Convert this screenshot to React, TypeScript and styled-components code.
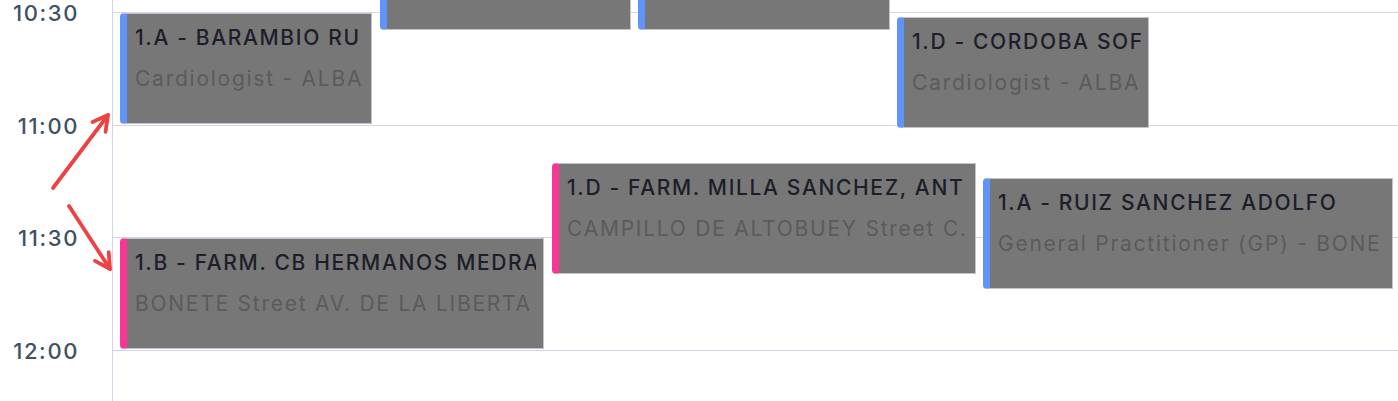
import React from 'react';
import styled, { createGlobalStyle } from 'styled-components';

const GlobalStyle = createGlobalStyle`
  html, body {
    margin: 0;
    padding: 0;
    background: #ffffff;
    overflow: hidden;
  }
  body {
    font-family: Inter, "Noto Sans", Arial, sans-serif;
  }
`;

const SLOT = 112.5;

const Page = styled.div`
  position: relative;
  display: flex;
  width: 1398px;
  height: 401px;
  overflow: hidden;
`;

const TimeColumn = styled.div`
  display: flex;
  flex-direction: column;
  width: 112px;
  flex-shrink: 0;
`;

const TimeLabel = styled.div`
  height: ${SLOT}px;
  flex-shrink: 0;
  padding-right: 33px;
  text-align: right;
  font-size: 22px;
  line-height: 27px;
  font-weight: 500;
  color: #3e5165;
  letter-spacing: 1.6px;
`;

const DayArea = styled.div`
  position: relative;
  flex: 1;
  border-left: 1px solid #d3d4e6;
  padding-top: 12px;
  display: flex;
  flex-direction: column;
`;

const SlotRow = styled.div`
  height: ${SLOT}px;
  flex-shrink: 0;
  box-sizing: border-box;
  border-top: 1px solid #d3d4e6;
`;

const Event = styled.div<{ $accent: string }>`
  position: absolute;
  box-sizing: border-box;
  display: flex;
  flex-direction: column;
  background: #777777;
  border: 1px solid #c4c4c8;
  border-left: 7px solid ${(p) => p.$accent};
  border-radius: 4px 0 0 4px;
  padding: 12px 7px 0 8px;
  overflow: hidden;
`;

const Title = styled.div`
  font-size: 21px;
  line-height: 24px;
  font-weight: 500;
  color: #1d1e29;
  letter-spacing: 1.65px;
  white-space: nowrap;
  overflow: hidden;
`;

const Subtitle = styled.div`
  margin-top: 17px;
  font-size: 21px;
  line-height: 24px;
  color: #5b5b5d;
  letter-spacing: 1.75px;
  white-space: nowrap;
  overflow: hidden;
`;

const Overlay = styled.svg`
  position: absolute;
  left: 0;
  top: 0;
  pointer-events: none;
`;

const BLUE = '#5f94fb';
const PINK = '#fb3593';

type Appt = {
  left: number;
  top: number;
  width: number;
  accent: string;
  title?: string;
  subtitle?: string;
};

// coordinates relative to the day canvas (left edge at x=113)
const appts: Appt[] = [
  { left: 7, top: 1, width: 252, accent: BLUE, title: '1.A - BARAMBIO RU', subtitle: 'Cardiologist - ALBA' },
  { left: 267, top: -93, width: 251, accent: BLUE },
  { left: 525, top: -93, width: 252, accent: BLUE },
  { left: 784, top: 5, width: 252, accent: BLUE, title: '1.D - CORDOBA SOF', subtitle: 'Cardiologist - ALBA' },
  { left: 7, top: 226, width: 424, accent: PINK, title: '1.B - FARM. CB HERMANOS MEDRA', subtitle: 'BONETE Street AV. DE LA LIBERTA' },
  { left: 439, top: 151, width: 424, accent: PINK, title: '1.D - FARM. MILLA SANCHEZ, ANT', subtitle: 'CAMPILLO DE ALTOBUEY Street C.' },
  { left: 870, top: 166, width: 410, accent: BLUE, title: '1.A - RUIZ SANCHEZ ADOLFO', subtitle: 'General Practitioner (GP) - BONE' },
];

const times = ['10:30', '11:00', '11:30', '12:00'];

function Arrow({ x1, y1, x2, y2 }: { x1: number; y1: number; x2: number; y2: number }) {
  const ang = Math.atan2(y2 - y1, x2 - x1);
  const len = 17;
  const spread = 0.5;
  const ax = x2 - len * Math.cos(ang - spread);
  const ay = y2 - len * Math.sin(ang - spread);
  const bx = x2 - len * Math.cos(ang + spread);
  const by = y2 - len * Math.sin(ang + spread);
  return (
    <g stroke="#ee4242" strokeWidth={3.8} strokeLinecap="round" strokeLinejoin="round" fill="none">
      <line x1={x1} y1={y1} x2={x2} y2={y2} />
      <polyline points={`${ax},${ay} ${x2},${y2} ${bx},${by}`} />
    </g>
  );
}

export default function App() {
  return (
    <>
      <GlobalStyle />
      <Page>
        <TimeColumn>
          {times.map((t) => (
            <TimeLabel key={t}>{t}</TimeLabel>
          ))}
        </TimeColumn>
        <DayArea>
          {times.map((t) => (
            <SlotRow key={t} />
          ))}
          {appts.map((a, i) => (
            <Event
              key={i}
              $accent={a.accent}
              style={{ left: a.left, top: 12 + a.top, width: a.width, height: 111 }}
            >
              {a.title && <Title>{a.title}</Title>}
              {a.subtitle && <Subtitle>{a.subtitle}</Subtitle>}
            </Event>
          ))}
        </DayArea>
        <Overlay width={1398} height={401}>
          <Arrow x1={53} y1={188} x2={108} y2={115} />
          <Arrow x1={69} y1={206} x2={110} y2={269} />
        </Overlay>
      </Page>
    </>
  );
}
